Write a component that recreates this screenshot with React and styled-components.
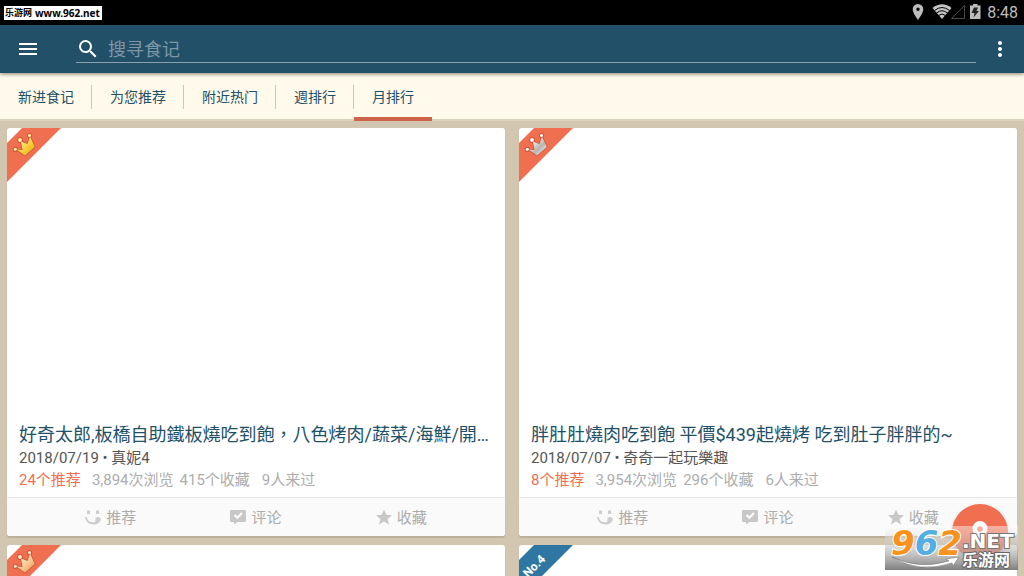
import { useState } from "react";
import styled, { createGlobalStyle, ThemeProvider } from "styled-components";
import { MdMenu, MdSearch, MdMoreVert } from "react-icons/md";

const theme = {
  colors: {
    navy: "#225069",
    cream: "#fffaeb",
    sand: "#d2c6b1",
    coral: "#f06f51",
    blue: "#2e77a3",
    grey: "#adadad",
  },
};

const TABS = ["新进食记", "为您推荐", "附近热门", "週排行", "月排行"];

const POSTS = [
  {
    id: 1,
    crown: "gold",
    title: "好奇太郎,板橋自助鐵板燒吃到飽，八色烤肉/蔬菜/海鮮/開…",
    date: "2018/07/19",
    author: "真妮4",
    likes: "24个推荐",
    views: "3,894次浏览",
    saves: "415个收藏",
    visits: "9人来过",
  },
  {
    id: 2,
    crown: "silver",
    title: "胖肚肚燒肉吃到飽 平價$439起燒烤 吃到肚子胖胖的~",
    date: "2018/07/07",
    author: "奇奇一起玩樂趣",
    likes: "8个推荐",
    views: "3,954次浏览",
    saves: "296个收藏",
    visits: "6人来过",
  },
  { id: 3, crown: "bronze" },
  { id: 4, rank: "No.4" },
];

const CROWNS = {
  gold: ["#fff6a0", "#f9cb35", "#e09a10"],
  silver: ["#ffffff", "#b9b4b2", "#ffffff"],
  bronze: ["#fff0cf", "#f7c48d", "#d98a4a"],
};

const App = () => {
  const [active, setActive] = useState("月排行");

  return (
    <ThemeProvider theme={theme}>
      <GlobalStyle />
      <Wrapper>
        <StatusBar>
          <SiteTag>
            <SiteName>乐游网</SiteName>
            <span>www.962.net</span>
          </SiteTag>
          <StatusIcons />
          <Clock>8:48</Clock>
        </StatusBar>
        <AppBar>
          <IconBtn aria-label="menu">
            <MdMenu />
          </IconBtn>
          <SearchField>
            <MdSearch />
            <SearchInput aria-label="搜寻食记" placeholder="搜寻食记" />
          </SearchField>
          <IconBtn aria-label="more">
            <MdMoreVert />
          </IconBtn>
        </AppBar>
        <Tabs>
          {TABS.map((tab) => (
            <Tab
              key={tab}
              $active={tab === active}
              onClick={() => setActive(tab)}
            >
              {tab}
            </Tab>
          ))}
        </Tabs>
        <Feed>
          {POSTS.map((post) => (
            <Post key={post.id} post={post} />
          ))}
        </Feed>
        <Fab aria-label="nearby">
          <svg width="24" height="24" viewBox="0 0 24 24">
            <path
              fill="#fff"
              fillRule="evenodd"
              d="M12 1a7.500 7.500 0 0 0-7.500 7.500C4.500 14 12 23 12 23s7.500-9 7.500-14.500A7.500 7.500 0 0 0 12 1zm0 5.200a2.800 2.800 0 1 1 0 5.600 2.800 2.800 0 0 1 0-5.600z"
            />
          </svg>
        </Fab>
        <Watermark />
      </Wrapper>
    </ThemeProvider>
  );
};

const Post = ({ post }) => (
  <Card>
    <Media>
      <Ribbon post={post} />
    </Media>
    {post.title && (
      <>
        <Body>
          <Title>{post.title}</Title>
          <Meta>
            {post.date} • {post.author}
          </Meta>
          <Stats>
            <Likes>{post.likes}</Likes>
            <Stat>{post.views}</Stat>
            <Stat>{post.saves}</Stat>
            <Visits>{post.visits}</Visits>
          </Stats>
        </Body>
        <Actions>
          <Action>
            <SmileIcon />
            推荐
          </Action>
          <Action>
            <CommentIcon />
            评论
          </Action>
          <Action>
            <StarIcon />
            收藏
          </Action>
        </Actions>
      </>
    )}
  </Card>
);

const Ribbon = ({ post }) => {
  const id = `crown-${post.id}`;
  const [light, mid, dark] = CROWNS[post.crown] || [];

  return (
    <RibbonSvg width="54" height="54" viewBox="0 0 54 54">
      <path
        d="M15 0H54L0 54V15z"
        fill={post.crown ? theme.colors.coral : theme.colors.blue}
      />
      {post.crown ? (
        <>
          <defs>
            <linearGradient id={id} x1="0" y1="0" x2="1" y2="1">
              <stop offset="0.150" stopColor={light} />
              <stop offset="0.600" stopColor={mid} />
              <stop offset="1" stopColor={dark} />
            </linearGradient>
          </defs>
          <g
            fill="none"
            stroke="#a8401f"
            strokeOpacity="0.500"
            strokeWidth="1.600"
          >
            <path
              d="M9.500 21.500l6 .5L14 13.500l6.500 2.500L23 8.500l4.800 10.500L18 27.500z"
              strokeLinejoin="round"
            />
            <circle cx="8.300" cy="21.300" r="1.800" />
            <circle cx="13" cy="12" r="2.100" />
            <circle cx="22.500" cy="7.500" r="1.800" />
          </g>
          <path
            fill={`url(#${id})`}
            d="M9.500 21.500l6 .5L14 13.500l6.500 2.500L23 8.500l4.800 10.500L18 27.500z"
          />
          <g fill={light}>
            <circle cx="8.300" cy="21.300" r="1.500" />
            <circle cx="13" cy="12" r="1.900" />
            <circle cx="22.500" cy="7.500" r="1.500" />
          </g>
        </>
      ) : (
        <RankText
          x="18"
          y="24"
          textAnchor="middle"
          transform="rotate(-45 18 24)"
        >
          {post.rank}
        </RankText>
      )}
    </RibbonSvg>
  );
};

const StatusIcons = () => (
  <svg width="70" height="18" viewBox="0 0 70 18">
    {/* location */}
    <path
      fill="#bdbdbd"
      fillRule="evenodd"
      d="M7 0a5.300 5.300 0 0 0-5.300 5.300C1.700 9.300 7 16 7 16s5.300-6.700 5.300-10.700A5.300 5.300 0 0 0 7 0zm0 3.500a1.700 1.700 0 1 1 0 3.400 1.700 1.700 0 0 1 0-3.400z"
    />
    {/* wifi */}
    <path fill="#c4c4c4" d="M21.500 4Q31 -3.500 40.500 4L31 15z" />
    <g fill="none" stroke="#000" strokeWidth="1">
      <path d="M23.500 6.500Q31 0.500 38.500 6.500" />
      <path d="M25.500 9Q31 4.500 36.500 9" />
      <path d="M27.500 11.500Q31 8.500 34.500 11.500" />
    </g>
    {/* signal */}
    <path d="M40.500 14.500H53.500V1.500z" fill="none" stroke="#4a4a4a" />
    {/* battery */}
    <path
      fill="#bdbdbd"
      d="M59 1.500h3V0h4.500v1.500H69.500V15H59z"
    />
    <path fill="#222" d="M63 3.500h4l-1.500 3.500H68L62.500 13.500l1-4.500h-3z" />
  </svg>
);

const SmileIcon = () => (
  <svg width="16" height="16" viewBox="0 0 16 16" fill="#cdcdcd">
    <path d="M2 1.500h3v3.500H2zM11 1.500h3v3.500h-3z" />
    <path d="M0 8h1.500c1 3.500 3.200 5.300 6.200 5.300 1.800 0 3-.8 2.700-2.600C10.200 9 11.500 8 13 8c1.800 0 3 1 2.800 2.500C15.300 13.500 12 15.500 8.200 15.500 3.800 15.500.6 12.500 0 8z" />
  </svg>
);

const CommentIcon = () => (
  <svg width="16" height="16" viewBox="0 0 16 16">
    <path
      fill="#c8c8c8"
      d="M1 1h14a1 1 0 0 1 1 1v10a1 1 0 0 1-1 1H7.500L4 15.500v-2.500H1a1 1 0 0 1-1-1V2a1 1 0 0 1 1-1z"
    />
    <path d="M4.500 6l2.800 2.800L12 4" fill="none" stroke="#fff" strokeWidth="2" />
  </svg>
);

const StarIcon = () => (
  <svg width="16" height="16" viewBox="2 2 20 19">
    <path
      fill="#c8c8c8"
      d="M12 17.270L18.180 21l-1.640-7.030L22 9.240l-7.190-.61L12 2 9.190 8.630 2 9.240l5.460 4.730L5.820 21z"
    />
  </svg>
);

const Watermark = () => (
  <WatermarkSvg width="133" height="44" viewBox="0 0 133 44">
    <defs>
      <linearGradient id="plate" x1="0" y1="0" x2="0" y2="1">
        <stop offset="0" stopColor="#fff" stopOpacity="0.450" />
        <stop offset="0.400" stopColor="#c8c8c8" stopOpacity="0.500" />
        <stop offset="1" stopColor="#707070" stopOpacity="0.900" />
      </linearGradient>
    </defs>
    <rect width="133" height="44" fill="url(#plate)" />
    <LogoDigits x="6" y="29">
      <tspan fill="#f7931e">9</tspan>
      <tspan fill="#55aee3">6</tspan>
      <tspan fill="#f7931e">2</tspan>
    </LogoDigits>
    <path
      d="M7 31Q34 48 67 37l1 3 6-9-13 2 3 2Q34 44 7 31z"
      fill="#fff"
      stroke="#666"
      strokeWidth="0.500"
    />
    <LogoNet x="77" y="22">
      .NET
    </LogoNet>
    <LogoName x="77" y="40">
      乐游网
    </LogoName>
  </WatermarkSvg>
);

const GlobalStyle = createGlobalStyle`
  * {
    box-sizing: border-box;
  }

  body {
    margin: 0;
    font-family: Roboto, "Noto Sans CJK SC", sans-serif;
  }

  button,
  input {
    font-family: inherit;
    border: none;
    background: none;
    padding: 0;
  }
`;

const Wrapper = styled.div`
  position: relative;
  display: flex;
  flex-direction: column;
  height: 100vh;
  overflow: hidden;
  background-color: ${({ theme }) => theme.colors.sand};
`;

const StatusBar = styled.div`
  display: flex;
  align-items: center;
  flex-shrink: 0;
  gap: 6px;
  height: 25px;
  padding: 0 6px 0 4px;
  background-color: #000;
`;

const SiteTag = styled.div`
  display: flex;
  align-items: center;
  gap: 3px;
  height: 14px;
  padding: 0 2px 0 1px;
  margin-right: auto;
  background-color: #fff;
  color: #000;
  font: bold 10px "Noto Sans", sans-serif;
`;

const SiteName = styled.span`
  font: bold 9px "Noto Sans CJK SC", sans-serif;
`;

const Clock = styled.span`
  color: #bdbdbd;
  font-size: 16px;
`;

const AppBar = styled.header`
  position: relative;
  z-index: 1;
  display: flex;
  align-items: center;
  flex-shrink: 0;
  height: 48px;
  padding: 0 12px 0 16px;
  background-color: ${({ theme }) => theme.colors.navy};
  color: #fff;
  box-shadow: 0 1px 4px rgba(0, 0, 0, 0.5);
`;

const IconBtn = styled.button`
  display: flex;
  color: #fff;
  font-size: 24px;
  cursor: pointer;
`;

const SearchField = styled.label`
  display: flex;
  align-items: center;
  flex: 1;
  gap: 8px;
  height: 28px;
  margin: 0 12px 0 36px;
  border-bottom: 1px solid #8ba1ae;
  font-size: 24px;
`;

const SearchInput = styled.input`
  flex: 1;
  height: 27px;
  padding-top: 2px;
  color: #fff;
  font-size: 18px;
  outline: none;

  &::placeholder {
    color: #7e97a6;
  }
`;

const Tabs = styled.nav`
  display: flex;
  flex-shrink: 0;
  height: 48px;
  background-color: ${({ theme }) => theme.colors.cream};
  border-bottom: 2px solid #dbd3bf;
`;

const Tab = styled.button`
  position: relative;
  height: 48px;
  padding: 0 18px;
  color: ${({ theme }) => theme.colors.navy};
  font-size: 14px;
  border-bottom: 4px solid
    ${({ $active }) => ($active ? "#cf6248" : "transparent")};
  border-top: 2px solid transparent;
  cursor: pointer;

  &:not(:last-child)::after {
    content: "";
    position: absolute;
    top: 10px;
    right: 0;
    width: 1px;
    height: 24px;
    background-color: #d0c7b3;
  }
`;

const Feed = styled.main`
  display: grid;
  grid-template-columns: 1fr 1fr;
  grid-auto-rows: max-content;
  flex: 1;
  gap: 9px 14px;
  min-height: 0;
  padding: 7px;
  overflow: hidden;
`;

const Card = styled.article`
  min-width: 0;
  background-color: #fff;
  border-radius: 3px;
  box-shadow: 0 2px 1px #bbae9a;
  overflow: hidden;
`;

const Media = styled.div`
  position: relative;
  aspect-ratio: 16 / 9;
`;

const RibbonSvg = styled.svg`
  position: absolute;
  top: 0;
  left: 0;
`;

const RankText = styled.text`
  fill: #fff;
  font: bold 12px Roboto, sans-serif;
`;

const Body = styled.div`
  padding: 15px 12px 6px;
`;

const Title = styled.h2`
  margin: 0;
  color: ${({ theme }) => theme.colors.navy};
  font: 400 18px/24px Roboto, "Noto Sans CJK TC", sans-serif;
  white-space: nowrap;
  overflow: hidden;
`;

const Meta = styled.div`
  color: #555;
  font-size: 15px;
  line-height: 22px;
`;

const Stats = styled.div`
  display: flex;
  gap: 6px;
  color: ${({ theme }) => theme.colors.grey};
  font-size: 15px;
  line-height: 22px;
  white-space: nowrap;
`;

const Stat = styled.span``;

const Likes = styled(Stat)`
  margin-right: 5px;
  color: ${({ theme }) => theme.colors.coral};
`;

const Visits = styled(Stat)`
  margin-left: 6px;
`;

const Actions = styled.div`
  display: flex;
  height: 39px;
  padding: 0 31px 1px;
  background-color: #fafafa;
  border-top: 1px solid #e6e6e6;
`;

const Action = styled.button`
  display: flex;
  align-items: center;
  justify-content: center;
  flex: 1;
  gap: 5px;
  color: ${({ theme }) => theme.colors.grey};
  font-size: 15px;
  cursor: pointer;
`;

const Fab = styled.button`
  position: absolute;
  right: 16px;
  bottom: 16px;
  display: flex;
  align-items: center;
  justify-content: center;
  width: 56px;
  height: 56px;
  border-radius: 50%;
  background-color: ${({ theme }) => theme.colors.coral};
  box-shadow: 0 2px 4px rgba(0, 0, 0, 0.2);
  cursor: pointer;
`;

const WatermarkSvg = styled.svg`
  position: absolute;
  right: 6px;
  bottom: 6px;
  pointer-events: none;
`;

const LogoDigits = styled.text`
  font: italic bold 34px "DejaVu Sans", sans-serif;
  stroke: #fff;
  stroke-width: 2px;
  paint-order: stroke;
`;

const LogoNet = styled.text`
  fill: #fff;
  stroke: #777;
  stroke-width: 2px;
  paint-order: stroke;
  font: bold 20px "DejaVu Sans", sans-serif;
`;

const LogoName = styled.text`
  fill: #fff;
  stroke: #666;
  stroke-width: 2px;
  paint-order: stroke;
  font: bold 16px "Noto Sans CJK SC", sans-serif;
`;

export default App;
